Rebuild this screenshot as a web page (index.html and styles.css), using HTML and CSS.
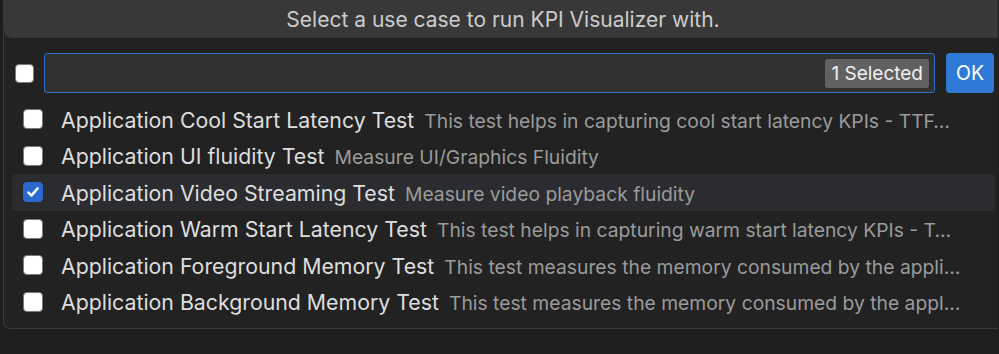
FILE: index.html
```html
<!DOCTYPE html>
<html lang="en">
<head>
<meta charset="utf-8">
<title>Quick Pick</title>
<link rel="stylesheet" href="styles.css">
</head>
<body>
<div class="widget">
  <div class="title">Select a use case to run KPI Visualizer with.</div>
  <div class="filter">
    <span class="cb"></span>
    <div class="input">
      <span class="badge">1 Selected</span>
    </div>
    <button class="ok">OK</button>
  </div>
  <ul class="list">
    <li class="row"><span class="cb"></span><span class="text"><span class="label">Application Cool Start Latency Test</span><span class="desc">This test helps in capturing cool start latency KPIs - TTF…</span></span></li>
    <li class="row"><span class="cb"></span><span class="text"><span class="label">Application UI fluidity Test</span><span class="desc">Measure UI/Graphics Fluidity</span></span></li>
    <li class="row active"><span class="cb checked"><svg viewBox="0 0 16 16" width="16" height="16"><path d="M3.4 8.6 L6.5 11.5 L12.6 4.4" fill="none" stroke="#fff" stroke-width="2.6" stroke-linecap="round" stroke-linejoin="round"/></svg></span><span class="text"><span class="label">Application Video Streaming Test</span><span class="desc">Measure video playback fluidity</span></span></li>
    <li class="row"><span class="cb"></span><span class="text"><span class="label">Application Warm Start Latency Test</span><span class="desc">This test helps in capturing warm start latency KPIs - T…</span></span></li>
    <li class="row"><span class="cb"></span><span class="text"><span class="label">Application Foreground Memory Test</span><span class="desc">This test measures the memory consumed by the appli…</span></span></li>
    <li class="row"><span class="cb"></span><span class="text"><span class="label">Application Background Memory Test</span><span class="desc">This test measures the memory consumed by the appl…</span></span></li>
  </ul>
</div>
</body>
</html>
```

FILE: styles.css
```css
html, body {
  margin: 0;
  padding: 0;
  overflow: hidden;
}
body {
  background: #1e1e1e;
  font-family: Inter, "Noto Sans", "Liberation Sans", sans-serif;
  width: 999px;
  height: 354px;
}
.widget {
  margin-left: 3px;
  width: 995px;
  height: 329px;
  box-sizing: border-box;
  background: #222222;
  border-left: 1px solid #3a3a3a;
  border-bottom: 1px solid #3a3a3a;
  border-bottom-left-radius: 7px;
}
.title {
  height: 38px;
  background: #383838;
  border-bottom-left-radius: 8px;
  color: #cccccc;
  font-size: 21px;
  line-height: 39px;
  text-align: center;
  padding-left: 4px;
}
.filter {
  display: flex;
  align-items: center;
  margin-top: 15px;
  height: 40px;
  padding-left: 11px;
}
.cb {
  flex: none;
  width: 19px;
  height: 19px;
  box-sizing: border-box;
  background: #ffffff;
  border: 1.5px solid #7a7a7a;
  border-radius: 4px;
  display: flex;
  align-items: center;
  justify-content: center;
}
.cb.checked {
  background: #2a6ad0;
  border-color: #2a6ad0;
}
.input {
  margin-left: 10px;
  width: 891px;
  height: 40px;
  box-sizing: border-box;
  background: #313131;
  border: 1px solid #2f72c8;
  border-radius: 3px;
  display: flex;
  align-items: center;
  justify-content: flex-end;
  padding-right: 5px;
}
.badge {
  background: #616161;
  color: #f0f0f0;
  font-size: 19px;
  height: 29px;
  line-height: 29px;
  padding: 0 6px;
  border-radius: 3px;
}
.ok {
  margin-left: 11px;
  width: 48px;
  height: 40px;
  border: none;
  border-radius: 4px;
  background: #2f7ad6;
  color: #ffffff;
  font-family: inherit;
  font-size: 19.5px;
  padding: 0;
}
.list {
  list-style: none;
  margin: 8px 0 0 8px;
  padding: 0;
  width: 983px;
}
.row {
  display: flex;
  align-items: center;
  height: 36.5px;
  padding-left: 11px;
  padding-right: 30px;
  border-radius: 4px;
}
.row.active {
  background: #2b2c2f;
}
.row .cb {
  width: 20px;
  height: 20px;
}
.text {
  margin-left: 18px;
  white-space: nowrap;
  overflow: hidden;
  text-overflow: ellipsis;
  min-width: 0;
  padding-top: 1px;
}
.label {
  color: #dedede;
  font-size: 21.3px;
}
.desc {
  color: #9b9b9b;
  font-size: 19.3px;
  margin-left: 10px;
}
```
